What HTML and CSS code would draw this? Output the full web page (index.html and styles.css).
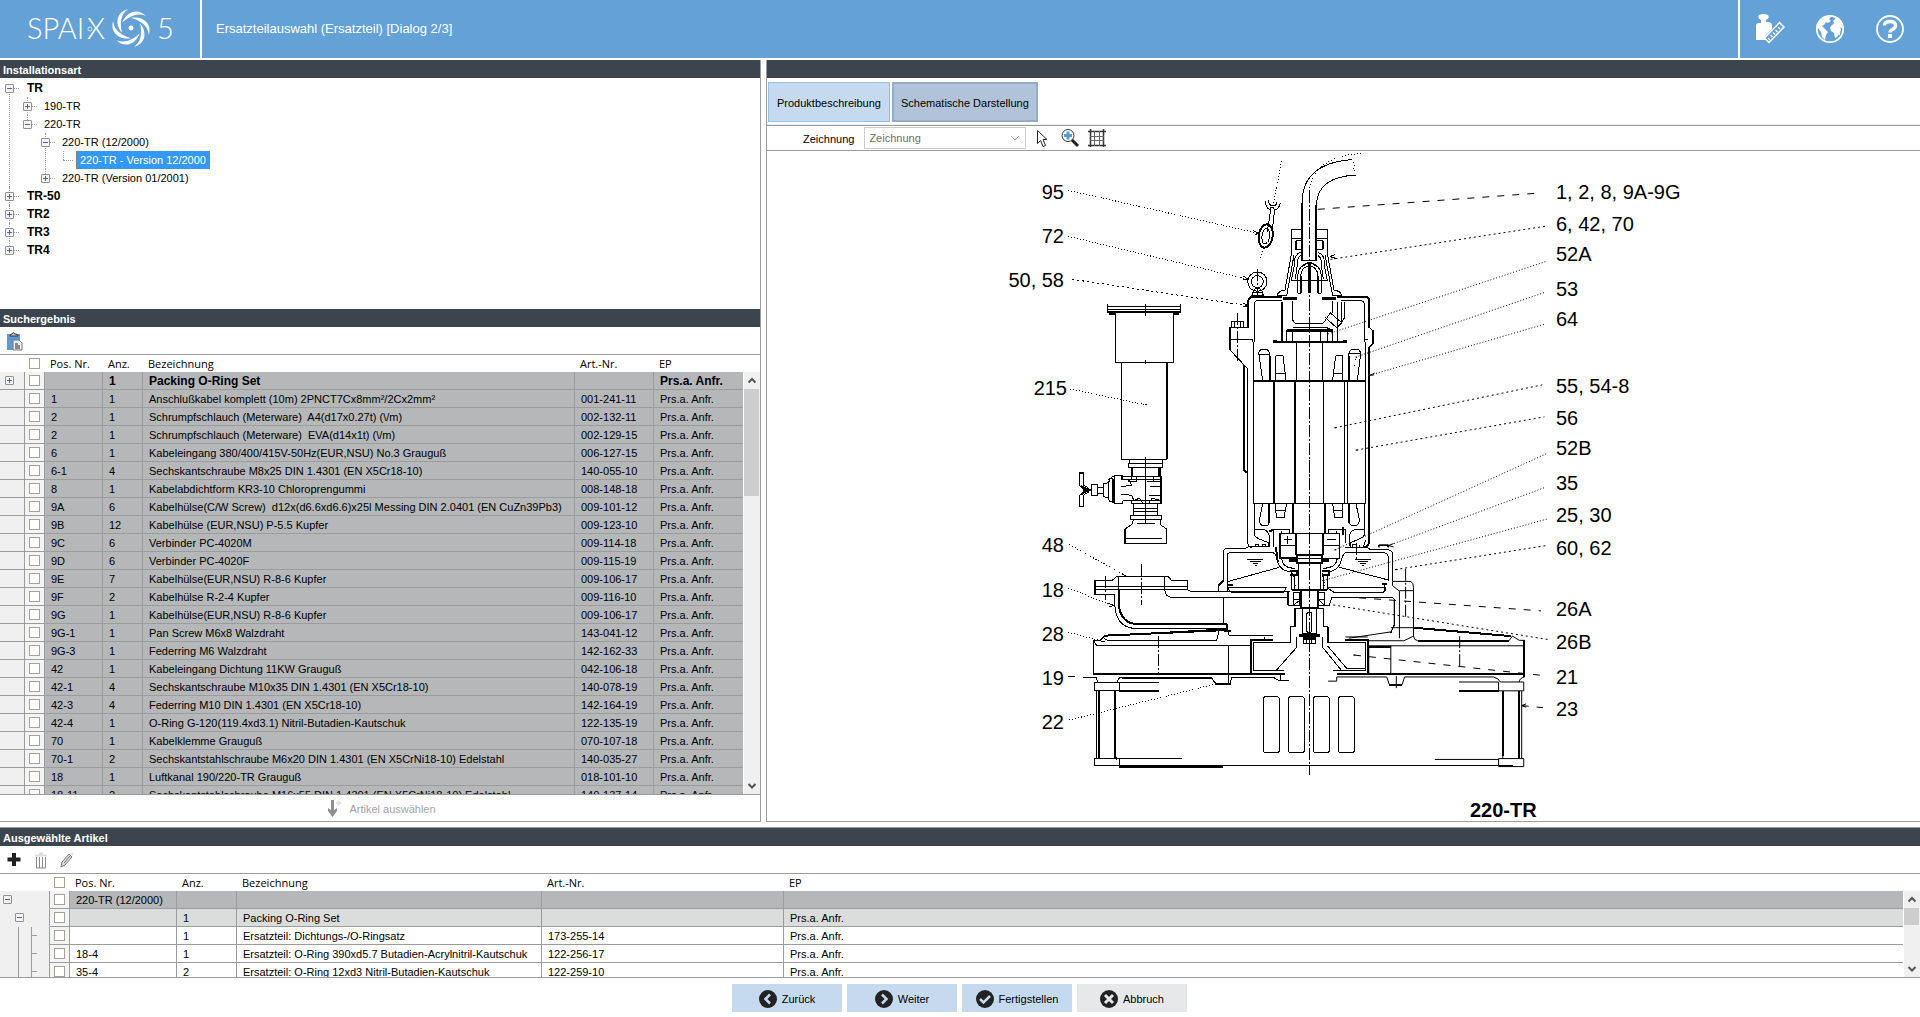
FILE: index.html
```html
<!DOCTYPE html>
<html lang="de">
<head>
    <meta charset="UTF-8">
    <meta name="viewport" content="width=device-width, initial-scale=1.0">
    <link rel="stylesheet" href="styles.css">
    <title>Spaix 5 - Ersatzteilauswahl</title>
</head>
<body>
    <header class="topbar">
        <div class="logo">
            <svg width="160" height="44" viewBox="20 6 160 44" role="img" aria-label="SPAIX 5">
                <text x="27" y="39" class="logo-text">SPAI</text>
                <text x="87" y="39" class="logo-text">X</text>
                <text x="157" y="39" class="logo-text">5</text>
                <circle cx="90" cy="29" r="2" fill="none" stroke="#fff" stroke-width=".7"/>
                <circle cx="131" cy="28" r="2.4" fill="#fff"/>
                <g fill="#fff">
                    <path id="blade" d="M128 9C117 12 114 23 122 33C120 24 120 15 128 9Z"/>
                    <use href="#blade" transform="rotate(60 131 28)"/>
                    <use href="#blade" transform="rotate(120 131 28)"/>
                    <use href="#blade" transform="rotate(180 131 28)"/>
                    <use href="#blade" transform="rotate(240 131 28)"/>
                    <use href="#blade" transform="rotate(300 131 28)"/>
                </g>
            </svg>
        </div>
        <h1 class="title">Ersatzteilauswahl (Ersatzteil) [Dialog 2/3]</h1>
        <nav class="top-actions">
            <button type="button" aria-label="Einheiten">
                <svg width="30" height="30" viewBox="0 0 30 30">
                    <path d="M4 1q5-2 9 0q2 3-2 5v2h3q3 1 3 3v4l-7 7v4H1V12q0-3 3-3h2V6Q2 4 4 1Z" fill="#fff"/>
                    <path d="M9.500 24L24.500 8.500L29 13L14 28.500Z" fill="#64a1d6" stroke="#fff" stroke-width="1.500"/>
                    <path d="M13 24l2 2M15.500 21l2 2M18 18.500l2 2M20.500 16l2 2M23 13l2 2" stroke="#fff" stroke-width="1.200"/>
                </svg>
            </button>
            <button type="button" aria-label="Sprache">
                <svg width="30" height="30" viewBox="0 0 30 30">
                    <circle cx="15" cy="15" r="13.200" fill="none" stroke="#fff" stroke-width="1.800"/>
                    <path d="M4 7L10 2.500L16 3L14 5L16 7L13 9L11 8L9 11L7 12L10 15L13 18L11 21L10 26L7 23L6 18L3 14L2 10Z" fill="#fff"/>
                    <path d="M16 12L19 9L18 7L21 4L26 8L28 14L26 14L24 12L26 15L25 19L22 23L20 24L19 19L16 17L15 14ZM24 20l1-2v4z" fill="#fff"/>
                </svg>
            </button>
            <button type="button" aria-label="Hilfe">
                <svg width="30" height="30" viewBox="0 0 30 30">
                    <circle cx="15" cy="15" r="13" fill="none" stroke="#fff" stroke-width="1.800"/>
                    <path d="M9.500 11.500Q9.500 7.500 15 7.500Q20.500 7.500 20.500 11.500Q20.500 14 17.500 15.500Q15 16.500 15 18.500" fill="none" stroke="#fff" stroke-width="3.400"/>
                    <rect x="13" y="20" width="4" height="4" fill="#fff"/>
                </svg>
            </button>
        </nav>
    </header>

    <main class="workspace">
        <div class="left-pane">
            <section class="install">
                <h2 class="bar">Installationsart</h2>
                <ul class="tree">
                    <li><div class="node root"><button class="toggle minus" type="button" aria-label="Zuklappen"></button><span>TR</span></div>
                        <ul>
                            <li><div class="node"><button class="toggle" type="button" aria-label="Aufklappen"></button><span>190-TR</span></div></li>
                            <li><div class="node"><button class="toggle minus" type="button" aria-label="Zuklappen"></button><span>220-TR</span></div>
                                <ul>
                                    <li><div class="node"><button class="toggle minus" type="button" aria-label="Zuklappen"></button><span>220-TR (12/2000)</span></div>
                                        <ul>
                                            <li><div class="node leaf"><span class="selected">220-TR - Version 12/2000</span></div></li>
                                        </ul>
                                    </li>
                                    <li><div class="node"><button class="toggle" type="button" aria-label="Aufklappen"></button><span>220-TR (Version 01/2001)</span></div></li>
                                </ul>
                            </li>
                        </ul>
                    </li>
                    <li><div class="node root"><button class="toggle" type="button" aria-label="Aufklappen"></button><span>TR-50</span></div></li>
                    <li><div class="node root"><button class="toggle" type="button" aria-label="Aufklappen"></button><span>TR2</span></div></li>
                    <li><div class="node root"><button class="toggle" type="button" aria-label="Aufklappen"></button><span>TR3</span></div></li>
                    <li><div class="node root"><button class="toggle" type="button" aria-label="Aufklappen"></button><span>TR4</span></div></li>
                </ul>
            </section>

            <section class="search">
                <h2 class="bar">Suchergebnis</h2>
                <div class="toolbar">
                    <button class="tool" type="button" aria-label="Einfügen">
                        <svg width="20" height="20" viewBox="0 0 20 20">
                            <path d="M2 3h13v16H2z" fill="#5b9bd5"/>
                            <path d="M5 5q0-2 2-2q1-3 3 0q3 0 3 2z" fill="#ccc" stroke="#333"/>
                            <path d="M8 9h6l3 3v7H8z" fill="#eee" stroke="#777"/>
                            <path d="M10 13h3M10 15h5M10 17h5" stroke="#222"/>
                        </svg>
                    </button>
                </div>
                <div class="grid">
                    <div class="grid-view">
                        <table class="results">
                            <colgroup><col class="w-tree"><col class="w-check"><col class="w-pos"><col class="w-anz"><col><col class="w-art"><col class="w-ep"></colgroup>
                            <thead>
                                <tr><th></th><th><input type="checkbox" aria-label="Alle"></th><th>Pos. Nr.</th><th>Anz.</th><th>Bezeichnung</th><th>Art.-Nr.</th><th>EP</th></tr>
                            </thead>
                            <tbody id="results"></tbody>
                        </table>
                    </div>
                    <div class="scrollbar">
                        <svg class="arrow" viewBox="0 0 16 17"><path d="M4.500 10.500L8 7L11.500 10.500"/></svg>
                        <div class="thumb tall"></div>
                        <svg class="arrow end" viewBox="0 0 16 17"><path d="M4.500 7L8 10.500L11.500 7"/></svg>
                    </div>
                </div>
                <button class="pick" type="button" disabled>
                    <svg width="18" height="20" viewBox="0 0 18 20">
                        <path d="M5 1h3v10l3-2v3l-4.500 6L2 12V9l3 2z" fill="#8f8f8f"/>
                        <path d="M10 4h5M12.500 1.500v5" stroke="#e3e3e3" stroke-width="2"/>
                    </svg>
                    Artikel auswählen
                </button>
            </section>
        </div>

        <section class="right-pane">
            <h2 class="bar" aria-label="Darstellung"></h2>
            <div class="tabs">
                <button type="button" class="tab">Produktbeschreibung</button>
                <button type="button" class="tab active">Schematische Darstellung</button>
            </div>
            <div class="draw-tools">
                <label for="zeichnung">Zeichnung</label>
                <div class="combo">
                    <select id="zeichnung" disabled><option>Zeichnung</option></select>
                    <svg width="10" height="6" viewBox="0 0 10 6"><path d="M1 1l4 4l4-4" fill="none" stroke="#aaa"/></svg>
                </div>
                <button class="tool" type="button" aria-label="Auswahl">
                    <svg width="20" height="20" viewBox="0 0 20 20"><path d="M4.500 2.500v13l3-3l2.500 6l2.500-1l-2.500-6h4z" fill="#fff" stroke="#222"/></svg>
                </button>
                <button class="tool" type="button" aria-label="Zoom">
                    <svg width="20" height="20" viewBox="0 0 20 20">
                        <circle cx="8" cy="7.500" r="6" fill="#fff" stroke="#333"/>
                        <path d="M4 7.500h8M8 3.500v8" stroke="#5b9bd5" stroke-width="3"/>
                        <path d="M12 12l6 6" stroke="#222" stroke-width="3"/>
                    </svg>
                </button>
                <button class="tool" type="button" aria-label="Raster">
                    <svg width="20" height="20" viewBox="0 0 20 20">
                        <path d="M3.500 1v18M16.500 1v18M1 3.500h18M1 17.500h18" stroke="#333" stroke-width="1.500"/>
                        <path d="M7.500 3v15M12.500 3v15M3 8.500h14M3 12.500h14" stroke="#666"/>
                    </svg>
                </button>
            </div>
            <svg class="drawing" viewBox="767 151 1153 670" role="img" aria-label="Schnittzeichnung 220-TR">
                <!-- upper half: cable, gland, motor head, canister -->
                <g transform="translate(980 150) scale(.33333)">
                    <path d="M382 463V486H602V463M382 469H602M382 480H602M407 488V637H580V488M425 637V928H562M449 928V940H548V928M445 940H548V952H445ZM455 952V990M541 952V980M496 463V497M496 630V642M496 920V990M384 990L404 976H425V990M425 980H545V990M298 990V968H310V990"/>
                    <path class="thick" d="M382 487H602M388 491H405M583 491H598M562 637V928M457 952V980M538 952V980"/>
                    <path d="M862 246L872 180Q856 175 857 152M876 246L884 180Q896 178 902 158M866 150Q866 168 880 168Q890 168 890 155M868 180Q875 163 884 180"/>
                    <ellipse class="thick" cx="857" cy="258" rx="21" ry="35" transform="rotate(8 857 258)"/>
                    <ellipse cx="857" cy="258" rx="11" ry="24" transform="rotate(8 857 258)"/>
                    <circle cx="832" cy="395" r="29"/>
                    <circle cx="832" cy="395" r="18"/>
                    <path d="M820 422Q832 408 846 422L850 437H815ZM817 428H848"/>
                    <path class="thick" d="M966 333V160M1009 333V165"/>
                    <path d="M966 160Q966 40 1115 29M1009 165Q1012 80 1130 75"/>
                    <path d="M966 333H1009M935 265V240H966M1009 240H1042V265M935 265H966M1009 265H1042M935 265V308L915 420Q890 425 893 437M1042 265V310L1062 420Q1085 424 1084 437M948 272V298H966M948 272H966M1009 272H1028V298H1009M942 315L920 437M1035 315L1058 437"/>
                    <path d="M963 306Q940 316 944 340L934 392H1042L1032 340Q1036 316 1013 306M963 316Q950 322 952 345L946 388M1013 316Q1026 322 1024 345L1030 388M953 430V375Q957 345 985 338M962 430V375Q966 352 985 348M953 430H962M1024 430V375Q1020 345 992 338M1014 430V375Q1010 352 992 348M1014 430H1024M966 350L985 338M1012 350L992 338"/>
                    <path class="heavy" d="M988 335V430"/>
                    <path class="thick" d="M948 272V298M1028 272V298M962 378V430M1014 378V430M805 533V455Q805 441 818 441H905M1070 441H1155Q1168 441 1168 455V533"/>
                    <path d="M905 452H832Q823 452 823 463V577M1084 452H1140Q1153 452 1153 465V577M893 437H920M1060 437H1084M1168 533Q1180 540 1180 552V580L1165 595M1153 570H1165M818 568V577M805 533H750V600L802 655V990M750 568H818M755 531V515H790V531M763 515V531M782 515V531"/>
                    <path class="thick" d="M905 455V577M792 645V955Q792 965 800 968M1180 540V580M750 533V600"/>
                    <path class="heavy" d="M908 446H950M1027 446H1068"/>
                    <path d="M938 452V510L945 520H1030M1058 452V490M1050 488L1085 518M1035 502L1070 533M1085 518L1095 500V455M1073 455V577M1085 455V515M938 533H1040L1058 540M920 577V540M1058 540V577M937 545V575M1022 545V575M1042 545V575M949 577V690M1028 577V690M1030 520L1050 490M1070 533L1085 518"/>
                    <path class="heavy" d="M920 542H1058M878 575H890M1090 575H1100"/>
                    <path class="thick" d="M878 576H1100"/>
                    <path d="M820 577V990M835 615Q835 597 852 597Q869 597 869 615V690M835 615H869M837 615L848 690M887 617H909L918 690M887 617V690M887 670H915M1067 617H1088V690M1067 617L1058 690M1062 670H1088M1106 690V615Q1106 597 1124 597Q1142 597 1142 612L1132 690M1106 612H1142M1157 577V990M1030 692V990M1093 692V990M1103 692V990"/>
                    <path class="thick" d="M820 692H1157M882 692V990M945 692V990M1168 595V990M869 617V690M1106 617V690"/>
                    <path class="center" d="M988 122V990M772 490V637M832 357V440"/>
                    <path class="dots" d="M905 33L880 160M850 295L840 330M988 122Q1000 20 1145 10M1115 29L1124 45L1120 55L1130 70M1130 620L1122 650"/>
                    <path class="dots" d="M265 121L835 250M265 259L800 387M270 717L500 765"/>
                    <path class="dashes" d="M277 388L805 467"/>
                    <path d="M820 242L835 250L824 254M790 378L803 387L790 390M790 460L805 467L790 470M1050 320L1064 314M1050 320L1070 326M496 765H502"/>
                </g>
                <!-- lower half: valve, oil chamber, volute, base frame -->
                <g transform="translate(980 460) scale(.33333)">
                    <path d="M445 10H548V22H445ZM458 24V50M541 24V132M404 46H428V58H541M404 46V132H428V122M428 122H545V132H455V122M385 70V115L390 125H400M385 70L390 57H400M370 72V110M370 72L385 68M370 110L385 114M298 40H310V75L325 84M298 40V75L312 90M298 140V108L312 92M298 140H310V106L325 96M335 75H352V107H335ZM352 82H370V102H352M424 80L455 76M424 102L455 106M445 66H470V50M520 50V66H545V80M465 120L478 115L490 132M505 132L515 116L535 118L545 128M500 66H520M460 132V165M533 132V165M463 145H533M463 155H533M452 168H545V178H452ZM460 178L457 192L435 207V252H560V207L542 195V178M435 235H545M470 190H525M496 0V190M510 80H541M508 106H541M455 106L462 122M455 76L445 58"/>
                    <path class="thick" d="M457 24V50M538 24V50M400 57V128M312 90H335M325 84V100M543 60V132M435 207V252M302 78L325 90L302 104"/>
                    <path d="M820 0V130H1157V0M1030 0V130M1093 0V130M1103 0V130M802 0V240Q803 262 815 262M1157 240Q1150 262 1150 262H1110M790 0Q792 30 800 38M823 130V225Q825 235 865 247V260M823 208H850Q868 215 868 230V258M1153 130V225Q1151 235 1112 247V260M1153 208H1126Q1108 215 1108 230V258"/>
                    <path class="thick" d="M882 0V130M945 0V130M1168 0V240Q1168 262 1150 262M940 130V222M1036 130V222M868 130V190M1108 130V190"/>
                    <path d="M848 130L838 180Q838 198 855 198Q866 198 868 185M887 130V152L890 174H912L920 130M887 152H917M1128 130L1138 180Q1138 198 1121 198Q1110 198 1108 185M1089 130V152L1086 174H1064L1058 130M1089 152H1060M827 260V254H837V260M848 260V254H858V260M1118 260V254H1128M1140 254V262"/>
                    <path d="M900 222H1078V295H900ZM900 258H949M1028 258H1078M912 240H936M924 228V252M1042 240H1068M880 262V208H930V222M905 214V222M1096 250V208H1046V222M1071 214V222M955 308V388M1022 308V388M935 335V390M1042 345V390M945 345V390M1030 345V388"/>
                    <path class="thick" d="M900 222V295M949 222V285M1028 222V285M950 285H1026V308H950ZM900 295H950M1088 200V225M868 215L880 208M935 390H1042M930 333H950V345H930M1026 333H1046V345H1026"/>
                    <path class="heavy" d="M928 303H950M1028 303H1048"/>
                    <path d="M715 392V375L730 362V275Q732 265 745 265H795L805 260H870M742 375V285Q742 278 752 278H878Q888 280 890 295L895 312Q905 333 930 335M905 295Q908 325 945 325M1072 295Q1068 325 1030 325M1046 335Q1070 333 1080 312L1086 295Q1090 278 1100 278H1210Q1224 280 1225 290V362M1096 262H1160L1170 268H1218Q1236 270 1237 280V362M742 365L898 322M1078 322L1225 360M745 382H920L910 397H758Q745 397 745 382M1040 382H1218Q1218 397 1205 397H1062L1040 382M742 365V395M1215 370V395"/>
                    <path class="thick" d="M715 378L730 362M745 375H760M1205 372H1222M888 262L893 305"/>
                    <path d="M802 298H850M810 305H842M818 312H835M824 318H830M1125 298H1173M1133 305H1165M1141 312H1158M1147 318H1153M1195 262V256H1222V262"/>
                    <path d="M344 362H395L410 350H565L575 362H622V388H344ZM344 380H622M344 388V405H405V440Q410 500 460 505H740L748 528H878M417 350V390M554 350V385Q555 412 575 412H925V436H955M622 388L632 395H930M731 412V490M1022 436H1048L1056 412H1235Q1245 415 1245 430V490L1232 520"/>
                    <path class="thick" d="M417 390V440Q425 490 470 492H742M742 492V515M344 362V405M731 514H752M925 412V436M925 395V412"/>
                    <path d="M940 398H960V436H940ZM1016 398H1034V436H1016ZM940 420H960M1016 420H1034M940 436L960 420M1016 420L1034 436M962 390V445M1013 390V445M967 445V522H1010V445"/>
                    <rect x="980" y="457" width="16" height="61" rx="8"/>
                    <path class="thick" d="M962 390V445M1013 390V445M967 445H1010"/>
                    <path d="M340 640V542H360L375 527L715 508M385 543H705Q715 540 715 512M368 532L385 543M340 542L350 556H812M745 556V640M820 547V632H912M820 547H932V500H945V445H1031V500H1043V547H1157V632H1058M950 562L888 632M950 562V530M1028 562L1085 632M1028 530V562M1043 558L1100 625H1157M970 538H1006V552H970ZM980 538V552M996 538V552M745 558H812M878 528H748M854 532V540"/>
                    <path class="thick" d="M812 640V540H878M1095 540H1163V640M340 641H915M375 527L740 510M945 445V500M1043 500V547"/>
                    <path class="heavy" d="M957 528H1020M970 534H1008"/>
                    <path d="M340 652H350L352 665M412 665Q415 652 425 652H695L708 675H750L755 652H880L900 663H926M902 641V663M746 641V668M344 667H418V692H344ZM418 667H536M350 692V895M344 897H418V918H344ZM418 897H607M344 918H1600M315 653H340"/>
                    <path class="thick" d="M418 692H536M357 692V895M405 692V892L412 897M418 920H730M705 673H750M425 655H695"/>
                    <rect x="850" y="710" width="48" height="168" rx="8"/>
                    <rect x="925" y="710" width="48" height="168" rx="8"/>
                    <rect x="1000" y="710" width="48" height="168" rx="8"/>
                    <rect x="1075" y="710" width="48" height="168" rx="8"/>
                    <path class="center" d="M988 0V945M485 313V435M377 348V420M535 528V640M1130 250V300"/>
                    <path class="dots" d="M268 254L437 347M265 385L400 437M265 517L372 545M268 780L715 670M938 340L948 385M1026 340L1036 385"/>
                    <path class="long" d="M265 650L340 653"/>
                    <path d="M386 430L402 437L388 439M425 342L438 347M362 545H375M702 668L718 671"/>
                </g>
                <!-- right half of the casing and the leaders to the part numbers -->
                <g transform="translate(1180 150) scale(.34444 .42088)">
                    <path d="M617 1025H670Q678 1028 678 1040V1155Q680 1165 690 1166H955L965 1155L985 1165H1000M678 1135L960 1155M625 1135H678M617 1025V1035L637 1048V1160M637 1047H678M622 1070V1130L612 1145L490 1160M545 1178H1000M548 1178V1243M612 1178V1243M455 1262V1252H600L608 1270H645L652 1252H910Q925 1255 930 1264H998V1285H925V1264M430 1262H455M810 1264H925M937 1286V1445M992 1286V1445M925 1446H998V1465H925ZM740 1448H925M985 1264Q985 1255 1000 1252M480 1157H545M612 1135H625M678 1155L650 1166H545M578 945V938H605V945"/>
                    <path class="thick" d="M455 1244H1000M1000 1165V1252M810 1286H925M985 1286V1445M937 1286V1440M608 1270H645M678 1135L960 1155M690 1166H955M548 1180H612"/>
                    <path class="center" d="M655 995V1110M628 1250V1283M812 1155V1230"/>
                    <path class="dots" d="M430 437L1062 265M510 492L1060 338M552 535L1062 413M450 950L1068 720M605 940L1062 801M415 1023L1065 877"/>
                    <path class="dashes" d="M437 260L1062 181M450 660L1052 558M512 713L1058 634M625 997L1062 940M445 1081L1068 1163"/>
                    <path class="long" d="M400 141L1048 102M520 1064L1048 1095M505 1200L1058 1249M992 1320L1054 1325"/>
                    <path d="M448 660H454M510 713H516M448 950H454M503 1200H509M625 997H632M1005 1316L992 1320L1005 1324M620 935L605 940L620 943M565 530L552 535H562M413 1023H420"/>
                </g>
                <g class="part-no left">
                    <text x="1064" y="199">95</text>
                    <text x="1064" y="243">72</text>
                    <text x="1064" y="287">50, 58</text>
                    <text x="1067" y="395">215</text>
                    <text x="1064" y="552">48</text>
                    <text x="1064" y="597">18</text>
                    <text x="1064" y="641">28</text>
                    <text x="1064" y="685">19</text>
                    <text x="1064" y="729">22</text>
                </g>
                <g class="part-no">
                    <text x="1556" y="199">1, 2, 8, 9A-9G</text>
                    <text x="1556" y="231">6, 42, 70</text>
                    <text x="1556" y="261">52A</text>
                    <text x="1556" y="296">53</text>
                    <text x="1556" y="326">64</text>
                    <text x="1556" y="393">55, 54-8</text>
                    <text x="1556" y="425">56</text>
                    <text x="1556" y="455">52B</text>
                    <text x="1556" y="490">35</text>
                    <text x="1556" y="522">25, 30</text>
                    <text x="1556" y="555">60, 62</text>
                    <text x="1556" y="616">26A</text>
                    <text x="1556" y="649">26B</text>
                    <text x="1556" y="684">21</text>
                    <text x="1556" y="716">23</text>
                    <text class="drawing-name" x="1470" y="817">220-TR</text>
                </g>
            </svg>
        </section>
    </main>

    <section class="chosen">
        <h2 class="bar">Ausgewählte Artikel</h2>
        <div class="toolbar">
            <button class="tool" type="button" aria-label="Hinzufügen">
                <svg width="20" height="20" viewBox="0 0 20 20"><path d="M9 3v13M2.500 9.500h13" stroke="#222" stroke-width="4"/></svg>
            </button>
            <button class="tool" type="button" aria-label="Löschen" disabled>
                <svg width="20" height="20" viewBox="0 0 20 20"><path d="M4 5.500h12M8 3.500h4" stroke="#ddd" stroke-width="2"/><path d="M5.500 7v11h9V7M8.500 7v11M11.500 7v11" fill="none" stroke="#888"/></svg>
            </button>
            <button class="tool" type="button" aria-label="Bearbeiten" disabled>
                <svg width="20" height="20" viewBox="0 0 20 20"><path d="M4 17l1-5l7-8l3 3l-7 8z" fill="#ddd" stroke="#777"/><path d="M13 4l2-2l2 2l-2 2" fill="#e5e5e5"/><path d="M7 13l6-7" stroke="#777"/></svg>
            </button>
        </div>
        <div class="grid">
            <div class="grid-view">
                <table class="chosen-table">
                    <colgroup><col class="w-tree"><col class="w-check"><col class="w-pos"><col class="w-anz"><col class="w-bez"><col class="w-art"><col></colgroup>
                    <thead>
                        <tr><th></th><th><input type="checkbox" aria-label="Alle"></th><th>Pos. Nr.</th><th>Anz.</th><th>Bezeichnung</th><th>Art.-Nr.</th><th>EP</th></tr>
                    </thead>
                    <tbody>
                        <tr class="level-0">
                            <td><div class="branch"><button class="toggle minus" type="button" aria-label="Zuklappen"></button></div></td>
                            <td><input type="checkbox" aria-label="220-TR"></td><td>220-TR (12/2000)</td><td></td><td></td><td></td><td></td>
                        </tr>
                        <tr class="level-1">
                            <td><div class="branch"><button class="toggle minus" type="button" aria-label="Zuklappen"></button></div></td>
                            <td><input type="checkbox" aria-label="Packing O-Ring Set"></td><td></td><td>1</td><td>Packing O-Ring Set</td><td></td><td>Prs.a. Anfr.</td>
                        </tr>
                        <tr>
                            <td><svg class="lines" width="48" height="18"><path d="M18.500 0V18M31.500 0V18M31 8.500H37"/></svg></td>
                            <td><input type="checkbox" aria-label="173-255-14"></td><td></td><td>1</td><td>Ersatzteil: Dichtungs-/O-Ringsatz</td><td>173-255-14</td><td>Prs.a. Anfr.</td>
                        </tr>
                        <tr>
                            <td><svg class="lines" width="48" height="18"><path d="M18.500 0V18M31.500 0V18M31 8.500H37"/></svg></td>
                            <td><input type="checkbox" aria-label="122-256-17"></td><td>18-4</td><td>1</td><td>Ersatzteil: O-Ring 390xd5.7 Butadien-Acrylnitril-Kautschuk</td><td>122-256-17</td><td>Prs.a. Anfr.</td>
                        </tr>
                        <tr>
                            <td><svg class="lines" width="48" height="18"><path d="M18.500 0V18M31.500 0V18M31 8.500H37"/></svg></td>
                            <td><input type="checkbox" aria-label="122-259-10"></td><td>35-4</td><td>2</td><td>Ersatzteil: O-Ring 12xd3 Nitril-Butadien-Kautschuk</td><td>122-259-10</td><td>Prs.a. Anfr.</td>
                        </tr>
                    </tbody>
                </table>
            </div>
            <div class="scrollbar">
                <svg class="arrow" viewBox="0 0 16 17"><path d="M4.500 10.500L8 7L11.500 10.500"/></svg>
                <div class="thumb"></div>
                <svg class="arrow end" viewBox="0 0 16 17"><path d="M4.500 7L8 10.500L11.500 7"/></svg>
            </div>
        </div>
    </section>

    <footer class="buttons">
        <button type="button">
            <svg width="18" height="18" viewBox="0 0 18 18"><circle cx="9" cy="9" r="9" fill="#222"/><path d="M11 4.500L6.500 9l4.500 4.500" fill="none" stroke="#c6daef" stroke-width="2.500"/></svg>
            Zurück
        </button>
        <button type="button">
            <svg width="18" height="18" viewBox="0 0 18 18"><circle cx="9" cy="9" r="9" fill="#222"/><path d="M7 4.500L11.500 9L7 13.500" fill="none" stroke="#c6daef" stroke-width="2.500"/></svg>
            Weiter
        </button>
        <button type="button">
            <svg width="18" height="18" viewBox="0 0 18 18"><circle cx="9" cy="9" r="9" fill="#222"/><path d="M4 9l3.500 3.500l6.500-6.500" fill="none" stroke="#c6daef" stroke-width="2.500"/></svg>
            Fertigstellen
        </button>
        <button type="button" class="cancel">
            <svg width="18" height="18" viewBox="0 0 18 18"><circle cx="9" cy="9" r="9" fill="#222"/><path d="M5 5l8 8M13 5l-8 8" stroke="#e7e8ea" stroke-width="3"/></svg>
            Abbruch
        </button>
    </footer>

    <script src="script.js"></script>
</body>
</html>
```

FILE: styles.css
```css
* {
    box-sizing: border-box;
}

body {
    margin: 0;
    height: 100vh;
    display: flex;
    flex-direction: column;
    overflow: hidden;
    background-color: #fff;
    color: #000;
    font-family: "Liberation Sans", Arial, sans-serif;
    font-size: 11px;
    line-height: 14px;
}

button,
input,
select {
    font: inherit;
    color: inherit;
    margin: 0;
}

button {
    padding: 0;
    border: none;
    background: none;
}

svg {
    display: block;
}

ul {
    list-style: none;
    margin: 0;
    padding: 0;
}

/* Header */
.topbar {
    flex: none;
    display: flex;
    height: 60px;
    border-bottom: 2px solid #fff;
    background-color: #64a1d6;
    color: #fff;
}

.logo {
    width: 202px;
    padding: 6px 20px;
    border-right: 2px solid #fff;
}

.logo-text {
    font-family: Lato, sans-serif;
    font-weight: 300;
    font-size: 29px;
    fill: #fff;
}

.title {
    flex: 1;
    margin: 0;
    padding-left: 14px;
    font-size: 12px;
    font-weight: normal;
    line-height: 58px;
}

.top-actions {
    display: flex;
    align-items: center;
    gap: 30px;
    padding: 0 15px;
    border-left: 2px solid #fff;
}

.topbar .title {
    font-size: 13px;
}

.bar {
    flex: none;
    height: 18px;
    margin: 0;
    padding-left: 3px;
    background-color: #3c454e;
    color: #fff;
    font-size: 11px;
    font-weight: bold;
    line-height: 20px;
}

/* Panes */
.workspace {
    flex: 1;
    min-height: 0;
    display: flex;
    gap: 5px;
    margin-bottom: 5px;
}

.left-pane {
    flex: 0 0 761px;
    display: flex;
    flex-direction: column;
    border-right: 1px solid #9b9c9e;
    border-bottom: 1px solid #9b9c9e;
}

.install {
    flex: 0 0 249px;
}

.search {
    flex: 1;
    min-height: 0;
    display: flex;
    flex-direction: column;
}

.right-pane {
    flex: 1;
    min-width: 0;
    display: flex;
    flex-direction: column;
    border-left: 1px solid #9b9c9e;
    border-bottom: 1px solid #9b9c9e;
}

/* Tree */
.tree {
    padding-top: 1px;
}

.tree ul {
    margin-left: 18px;
}

.tree li {
    position: relative;
}

.tree li::before {
    content: "";
    position: absolute;
    left: 9px;
    top: 0;
    bottom: 0;
    border-left: 1px dotted #999;
}

.tree > li:first-child::before {
    top: 9px;
}

.tree li:last-child::before {
    bottom: auto;
    height: 9px;
}

.node {
    position: relative;
    display: flex;
    align-items: center;
    height: 18px;
    padding-left: 5px;
}

.node::after {
    content: "";
    order: 1;
    width: 5px;
    border-top: 1px dotted #999;
}

.node span {
    order: 2;
    margin-left: 7px;
}

.node .selected {
    height: 18px;
    margin-left: 3px;
    padding: 0 3px;
    border: 1px dotted #cc6f1f;
    background-color: #3399ff;
    color: #fff;
    line-height: 17px;
}

.leaf {
    padding-left: 9px;
}

.leaf::after {
    width: 10px;
}

.root span {
    margin-left: 8px;
    font-weight: bold;
    font-size: 12px;
}

.toggle {
    position: relative;
    flex: none;
    width: 9px;
    height: 9px;
    border: 1px solid #919191;
    border-radius: 1px;
    background: linear-gradient(#4b63a7, #4b63a7) center / 5px 1px no-repeat,
        linear-gradient(#4b63a7, #4b63a7) center / 1px 5px no-repeat, #f4f4f4;
}

.toggle.minus {
    background: linear-gradient(#4b63a7, #4b63a7) center / 5px 1px no-repeat, #f4f4f4;
}

/* Toolbars */
.toolbar {
    flex: none;
    display: flex;
    align-items: center;
    gap: 6px;
    height: 28px;
    padding-left: 5px;
    border-bottom: 1px solid #9b9c9e;
}

/* Grids */
.grid {
    flex: 1;
    min-height: 0;
    display: flex;
    gap: 1px;
    border-bottom: 1px solid #9b9c9e;
}

.grid-view {
    flex: 1;
    overflow: hidden;
}

table {
    width: 100%;
    table-layout: fixed;
    border-collapse: separate;
    border-spacing: 0;
}

th {
    height: 17px;
    padding: 0 0 0 5px;
    font-family: "Open Sans", "Noto Sans", sans-serif;
    font-weight: normal;
    line-height: 16px;
    text-align: left;
}

td {
    height: 18px;
    padding: 0 0 0 6px;
    border-right: 1px solid #9b9c9e;
    border-bottom: 1px solid #9b9c9e;
    line-height: 16px;
    white-space: pre;
    overflow: hidden;
}

td:first-child {
    padding: 0;
    background-color: #f0f0f0;
}

td:last-child {
    border-right: none;
}

th:nth-child(2),
td:nth-child(2) {
    padding: 0 0 0 4px;
}

td:nth-child(2) {
    background-color: #f4f4f4;
}

input[type="checkbox"] {
    appearance: none;
    display: block;
    width: 11px;
    height: 11px;
    border: 1px solid #a5a294;
    background-color: #fff;
}

.results td {
    background-color: #b5b7b9;
}

.results td:first-child {
    background-color: #f0f0f0;
    padding-left: 5px;
}

.results td:first-child .toggle {
    display: block;
}

.results td:nth-child(2) {
    background-color: #f4f4f4;
}

.results .group td {
    font-size: 12px;
    font-weight: bold;
}

.w-tree { width: 25px; }
.w-check { width: 20px; }
.w-pos { width: 58px; }
.w-anz { width: 40px; }
.w-art { width: 79px; }
.w-ep { width: 89px; }

.chosen-table .w-tree { width: 50px; }
.chosen-table .w-check { width: 20px; }
.chosen-table .w-pos { width: 107px; }
.chosen-table .w-anz { width: 60px; }
.chosen-table .w-bez { width: 305px; }
.chosen-table .w-art { width: 242px; }

.chosen-table td:first-child {
    border-bottom-color: #f0f0f0;
}

.chosen-table tr:not(.level-0):not(.level-1) td:first-child {
    border-bottom: none;
}

.chosen-table .level-0 td:nth-child(n + 3) {
    background-color: #b5b7b9;
}

.chosen-table .level-1 td:nth-child(n + 3) {
    background-color: #dadddc;
}

.branch {
    padding-left: 3px;
}

.level-1 .branch {
    padding-left: 15px;
}

.branch .toggle {
    display: block;
}

.lines path {
    fill: none;
    stroke: #9b9c9e;
    shape-rendering: crispEdges;
}

.scrollbar {
    flex: none;
    display: flex;
    flex-direction: column;
    width: 16px;
    margin-top: 17px;
    background-color: #f0f0f0;
}

.arrow {
    width: 16px;
    height: 17px;
}

.arrow path {
    fill: none;
    stroke: #555;
    stroke-width: 2;
}

.arrow.end {
    margin-top: auto;
}

.thumb {
    width: 15px;
    height: 17px;
    background-color: #cdcdcd;
}

.thumb.tall {
    height: 107px;
}

.pick {
    flex: none;
    display: flex;
    align-items: center;
    justify-content: center;
    gap: 5px;
    height: 26px;
    padding: 1px 0 0 2px;
    color: #a3a3a3;
}

/* Drawing pane */
.tabs {
    flex: none;
    display: flex;
    gap: 2px;
    height: 47px;
    padding: 4px 1px 2px;
    border-bottom: 1px solid #eee;
}

.tab {
    height: 40px;
    padding: 2px 8px 0;
    border: 1px solid #9bc0e6;
    background-color: #c6daef;
}

.tab + .tab {
    padding: 2px 7px 0;
}

.tab.active {
    border: 2px solid #94abc9;
    background-color: #b1c3d9;
}

.draw-tools {
    flex: none;
    display: flex;
    align-items: center;
    gap: 7px;
    height: 26px;
    padding-left: 36px;
    border-top: 1px solid #9b9c9e;
    border-bottom: 1px solid #9b9c9e;
}

.draw-tools label {
    padding: 1px 3px 0 0;
}

.combo {
    display: flex;
    align-items: center;
    width: 162px;
    height: 22px;
    padding-right: 5px;
    border: 1px solid #ccc;
}

.combo select {
    flex: 1;
    appearance: none;
    padding: 0 4px;
    border: none;
    background: none;
    color: #6d6d6d;
    opacity: 1;
}

.drawing {
    flex: 1;
    min-height: 0;
    width: 100%;
}

.drawing path,
.drawing circle,
.drawing ellipse,
.drawing rect {
    fill: none;
    stroke: #000;
    stroke-width: 1;
    vector-effect: non-scaling-stroke;
    shape-rendering: crispEdges;
}

.drawing .thick {
    stroke-width: 2;
}

.drawing .heavy {
    stroke-width: 3;
}

.drawing .dots {
    stroke-dasharray: 1 2;
}

.drawing .dashes {
    stroke-dasharray: 2 3;
}

.drawing .long {
    stroke-dasharray: 7 8;
}

.drawing .center {
    stroke-dasharray: 12 2 2 2;
}

.part-no {
    font-size: 20px;
}

.part-no.left {
    text-anchor: end;
}

.drawing-name {
    font-weight: bold;
}

/* Selected articles */
.chosen {
    flex: none;
    display: flex;
    flex-direction: column;
    height: 151px;
    border-top: 1px solid #9b9c9e;
}

/* Footer */
.buttons {
    flex: none;
    display: flex;
    justify-content: center;
    gap: 5px;
    height: 39px;
    padding: 6px 1px 0 0;
}

.buttons button {
    display: flex;
    align-items: center;
    justify-content: center;
    gap: 5px;
    width: 110px;
    height: 28px;
    padding-top: 1px;
    background-color: #c6daef;
}

.buttons .cancel {
    background-color: #e7e8ea;
}
```

FILE: script.js
```js
const results = [
    ['1', '1', 'Anschlußkabel komplett (10m) 2PNCT7Cx8mm²/2Cx2mm²', '001-241-11'],
    ['2', '1', 'Schrumpfschlauch (Meterware)  A4(d17x0.27t) (\\/m)', '002-132-11'],
    ['2', '1', 'Schrumpfschlauch (Meterware)  EVA(d14x1t) (\\/m)', '002-129-15'],
    ['6', '1', 'Kabeleingang 380/400/415V-50Hz(EUR,NSU) No.3 Grauguß', '006-127-15'],
    ['6-1', '4', 'Sechskantschraube M8x25 DIN 1.4301 (EN X5Cr18-10)', '140-055-10'],
    ['8', '1', 'Kabelabdichtform KR3-10 Chloroprengummi', '008-148-18'],
    ['9A', '6', 'Kabelhülse(C/W Screw)  d12x(d6.6xd6.6)x25l Messing DIN 2.0401 (EN CuZn39Pb3)', '009-101-12'],
    ['9B', '12', 'Kabelhülse (EUR,NSU) P-5.5 Kupfer', '009-123-10'],
    ['9C', '6', 'Verbinder PC-4020M', '009-114-18'],
    ['9D', '6', 'Verbinder PC-4020F', '009-115-19'],
    ['9E', '7', 'Kabelhülse(EUR,NSU) R-8-6 Kupfer', '009-106-17'],
    ['9F', '2', 'Kabelhülse R-2-4 Kupfer', '009-116-10'],
    ['9G', '1', 'Kabelhülse(EUR,NSU) R-8-6 Kupfer', '009-106-17'],
    ['9G-1', '1', 'Pan Screw M6x8 Walzdraht', '143-041-12'],
    ['9G-3', '1', 'Federring M6 Walzdraht', '142-162-33'],
    ['42', '1', 'Kabeleingang Dichtung 11KW Grauguß', '042-106-18'],
    ['42-1', '4', 'Sechskantschraube M10x35 DIN 1.4301 (EN X5Cr18-10)', '140-078-19'],
    ['42-3', '4', 'Federring M10 DIN 1.4301 (EN X5Cr18-10)', '142-164-19'],
    ['42-4', '1', 'O-Ring G-120(119.4xd3.1) Nitril-Butadien-Kautschuk', '122-135-19'],
    ['70', '1', 'Kabelklemme Grauguß', '070-107-18'],
    ['70-1', '2', 'Sechskantstahlschraube M6x20 DIN 1.4301 (EN X5CrNi18-10) Edelstahl', '140-035-27'],
    ['18', '1', 'Luftkanal 190/220-TR Grauguß', '018-101-10'],
    ['18-11', '2', 'Sechskantstahlschraube M16x55 DIN 1.4301 (EN X5CrNi18-10) Edelstahl', '140-137-14']
];

// Fill the search result table
const body = document.getElementById('results');
body.innerHTML = `
    <tr class="group">
        <td><button class="toggle" type="button" aria-label="Aufklappen"></button></td>
        <td><input type="checkbox" aria-label="Packing O-Ring Set"></td>
        <td></td><td>1</td><td>Packing O-Ring Set</td><td></td><td>Prs.a. Anfr.</td>
    </tr>
`;

results.forEach(([pos, count, name, number]) => {
    const row = document.createElement('tr');
    row.innerHTML = `
        <td></td>
        <td><input type="checkbox" aria-label="${number}"></td>
        <td>${pos}</td><td>${count}</td><td>${name}</td><td>${number}</td><td>Prs.a. Anfr.</td>
    `;
    body.appendChild(row);
});
```
